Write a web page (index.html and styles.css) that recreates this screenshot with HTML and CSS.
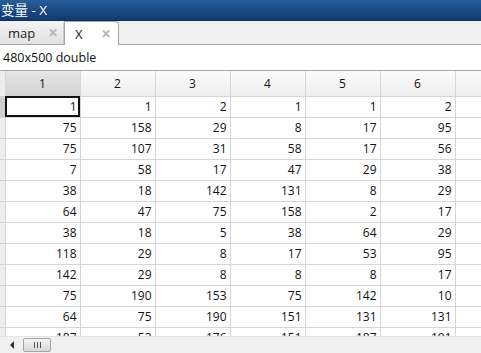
FILE: index.html
```html
<!DOCTYPE html>
<html lang="zh">
<head>
  <meta charset="UTF-8">
  <title>变量 - X</title>
  <link rel="stylesheet" href="styles.css">
</head>
<body>
  <div class="titlebar">变量 - X</div>

  <div class="tabbar">
    <div class="tab">map <span class="close">×</span></div>
    <div class="tab active">X <span class="close">×</span></div>
  </div>

  <div class="info">480x500 double</div>

  <div class="grid-wrap">
    <table class="grid">
      <thead>
        <tr>
          <th class="rowhead"></th>
          <th class="sel">1</th><th>2</th><th>3</th><th>4</th><th>5</th><th>6</th><th class="rest"></th>
        </tr>
      </thead>
      <tbody id="gridBody"></tbody>
    </table>
  </div>

  <div class="hscroll">
    <span class="arrow"></span>
    <span class="thumb"><i></i><i></i><i></i></span>
  </div>

  <script>
    const rows = [
      [1, 1, 2, 1, 1, 2],
      [75, 158, 29, 8, 17, 95],
      [75, 107, 31, 58, 17, 56],
      [7, 58, 17, 47, 29, 38],
      [38, 18, 142, 131, 8, 29],
      [64, 47, 75, 158, 2, 17],
      [38, 18, 5, 38, 64, 29],
      [118, 29, 8, 17, 53, 95],
      [142, 29, 8, 8, 8, 17],
      [75, 190, 153, 75, 142, 10],
      [64, 75, 190, 151, 131, 131],
      [187, 53, 176, 151, 187, 191]
    ];
    const body = document.getElementById('gridBody');
    rows.forEach((row, i) => {
      const tr = document.createElement('tr');
      let html = '<td class="rowhead"></td>';
      row.forEach((v, j) => {
        html += `<td${i === 0 && j === 0 ? ' class="cur"' : ''}>${v}</td>`;
      });
      html += '<td class="rest"></td>';
      tr.innerHTML = html;
      body.appendChild(tr);
    });
  </script>
</body>
</html>
```

FILE: styles.css
```css
body {
  margin: 0;
  width: 481px;
  height: 353px;
  overflow: hidden;
  font-family: "Open Sans", "Noto Sans CJK SC", sans-serif;
  font-size: 12px;
  color: #111;
  background: #fff;
  display: flex;
  flex-direction: column;
}

.titlebar {
  height: 20px;
  line-height: 20px;
  padding-left: 1px;
  color: #fff;
  font-size: 13.5px;
  background: linear-gradient(#2b5d9c, #18467f 60%, #123b70);
  border-bottom: 1px solid #0e2f5a;
}

.tabbar {
  height: 23px;
  display: flex;
  align-items: flex-end;
  background: #f0f0f0;
  border-bottom: 1px solid #a5a5a5;
}

.tab {
  height: 21px;
  line-height: 21px;
  padding-left: 8px;
  width: 55px;
  font-size: 13px;
  color: #222;
  background: linear-gradient(#f2f2f2, #e2e2e2);
  border-right: 1px solid #c8c8c8;
  position: relative;
}

.tab .close {
  position: absolute;
  right: 5px;
  top: -1px;
  color: #b8b8b8;
  font-size: 17px;
  font-weight: bold;
}

.tab.active {
  width: 43px;
  padding-left: 10px;
  height: 23px;
  line-height: 24px;
  margin-bottom: -1px;
  background: #fff;
  border: 1px solid #a5a5a5;
  border-bottom: none;
  border-radius: 0 4px 0 0;
}

.tab.active .close {
  right: 7px;
  top: 0;
}

.info {
  height: 25px;
  line-height: 25px;
  padding-left: 3px;
  font-size: 12.5px;
  border-bottom: 1px solid #a8a8a8;
}

.grid-wrap {
  flex: 1;
  overflow: hidden;
}

.grid {
  border-collapse: collapse;
  table-layout: fixed;
  width: 530px;
}

.grid th, .grid td {
  width: 75px;
  height: 21px;
  padding: 0 3px 0 0;
  border: 1px solid #d6d6d6;
  box-sizing: border-box;
  text-align: right;
  white-space: nowrap;
}

.grid th {
  height: 25px;
  font-weight: normal;
  text-align: center;
  padding: 0;
  background: linear-gradient(#fbfbfb, #eeeeee);
  border-top: none;
}

.grid th.sel {
  background: linear-gradient(#e6e6e6, #d2d2d2);
}

.grid .rowhead {
  width: 5px;
  padding: 0;
  border-left: none;
  background: #eeeeee;
}

.grid tbody tr:first-child .rowhead {
  background: #cfcfcf;
}

.grid .rest {
  width: 75px;
}

.grid td.cur {
  outline: 2px solid #111;
  outline-offset: -2px;
}

.hscroll {
  height: 16px;
  flex: none;
  display: flex;
  align-items: center;
  background: #f0f0f0;
  border-top: 1px solid #e4e4e4;
}

.arrow {
  width: 0;
  height: 0;
  margin-left: 10px;
  border-top: 4px solid transparent;
  border-bottom: 4px solid transparent;
  border-right: 4px solid #333;
}

.thumb {
  margin-left: 9px;
  width: 26px;
  height: 12px;
  display: flex;
  justify-content: center;
  align-items: center;
  gap: 2px;
  background: linear-gradient(#f4f4f4, #d8d8d8);
  border: 1px solid #a6a6a6;
  border-radius: 2px;
}

.thumb i {
  width: 1px;
  height: 6px;
  background: #555;
}
```
